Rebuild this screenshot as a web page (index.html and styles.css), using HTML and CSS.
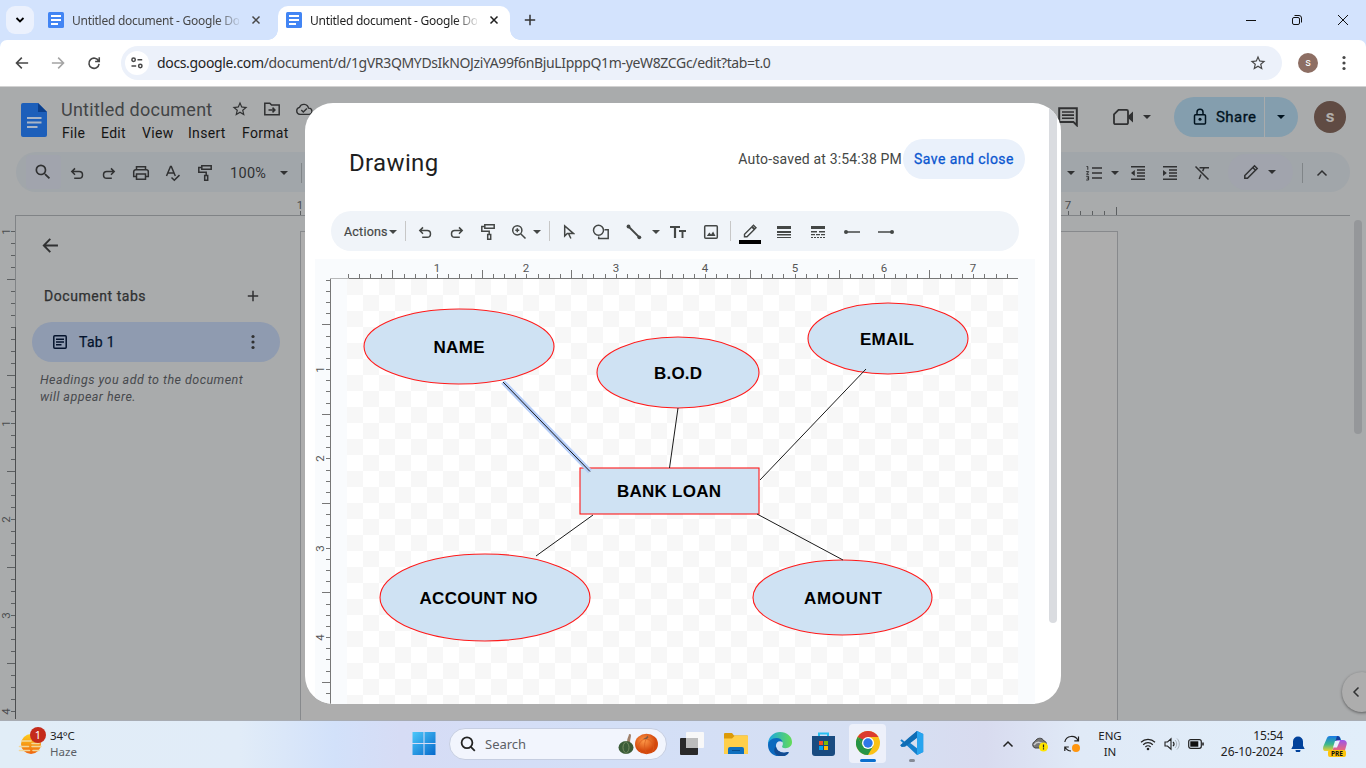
FILE: index.html
```html
<!DOCTYPE html>
<html lang="en">
<head>
<meta charset="utf-8">
<title>Untitled document - Google Docs</title>
<link rel="stylesheet" href="styles.css">
</head>
<body>
<svg class="defs" width="0" height="0" aria-hidden="true">
  <defs>
    <symbol id="caret" viewBox="0 0 10 6"><path d="M1 1h8L5 5z" fill="currentColor"/></symbol>
    <symbol id="close" viewBox="0 0 10 10"><path d="M1.500 1.500l7 7M8.500 1.500l-7 7" class="st15"/></symbol>
    <symbol id="star" viewBox="0 0 24 24"><path fill="currentColor" d="M22 9.24l-7.19-.62L12 2 9.19 8.63 2 9.24l5.46 4.73L5.82 21 12 17.27 18.18 21l-1.63-7.03L22 9.24zM12 15.4l-3.76 2.27 1-4.28-3.32-2.88 4.38-.38L12 6.1l1.71 4.04 4.38.38-3.32 2.88 1 4.28L12 15.4z"/></symbol>
    <symbol id="undo" viewBox="0 0 16 16"><path d="M5.200 13.200h5a3.300 3.300 0 0 0 0-6.600H3M6 3.400L2.800 6.600 6 9.800" class="st15"/></symbol>
    <symbol id="redo" viewBox="0 0 16 16"><path d="M10.800 13.200h-5a3.300 3.300 0 0 1 0-6.600H13M10 3.400l3.200 3.200L10 9.800" class="st15"/></symbol>
    <symbol id="roller" viewBox="0 0 16 18"><path d="M4.800 1.800h9.400v3.400H4.800zM4.800 3.500H1.800v4.700h7.400v3M7.700 11.500h3v4.700h-3z" class="st15"/></symbol>
    <symbol id="docsfile" viewBox="0 0 16 16"><rect width="16" height="16" rx="1.500" fill="#4285f4"/><path d="M3 4h10M3 8h10M3 12h7" stroke="#fff" stroke-width="1.800"/></symbol>
    <symbol id="back" viewBox="0 0 16 16"><path d="M15 8H2M7.800 1.800L1.700 8l6.100 6.200" class="st2"/></symbol>
    <symbol id="dots" viewBox="0 0 4 16"><g fill="currentColor"><circle cx="2" cy="2.500" r="1.600"/><circle cx="2" cy="8" r="1.600"/><circle cx="2" cy="13.500" r="1.600"/></g></symbol>
    <symbol id="chev" viewBox="0 0 12 8"><path d="M1.500 6.500L6 2l4.500 4.500" class="st15"/></symbol>
    <symbol id="plus" viewBox="0 0 12 12"><path d="M6 .8v10.400M.8 6h10.400" class="st15"/></symbol>
  </defs>
</svg>

<div class="tabstrip">
  <button class="tabsearch"><svg width="10" height="8" viewBox="0 0 10 8"><path d="M1.500 2L5 5.500 8.500 2" class="st2"/></svg></button>
  <div class="tab tab-idle">
    <svg class="favicon"><use href="#docsfile"/></svg>
    <span class="tab-text">Untitled document - Google Docs</span>
    <svg class="x"><use href="#close"/></svg>
  </div>
  <div class="tab tab-active">
    <svg class="favicon"><use href="#docsfile"/></svg>
    <span class="tab-text">Untitled document - Google Docs</span>
    <svg class="x"><use href="#close"/></svg>
  </div>
  <svg class="newtab" width="12" height="12"><use href="#plus"/></svg>
  <div class="winctl">
    <svg width="12" height="12" viewBox="0 0 12 12"><path d="M1 6.500h10" stroke="#111"/></svg>
    <svg width="12" height="12" viewBox="0 0 12 12"><rect x="1.500" y="3.500" width="7" height="7" rx="1.500" class="st1"/><path d="M3.500 1.500h4.500a2.500 2.500 0 0 1 2.500 2.500v4.500" class="st1"/></svg>
    <svg width="12" height="12" viewBox="0 0 12 12"><path d="M1 1l10 10M11 1L1 11" class="st1"/></svg>
  </div>
</div>

<div class="addressbar">
  <svg class="nav" viewBox="0 0 16 16"><use href="#back"/></svg>
  <svg class="nav nav-off" viewBox="0 0 16 16"><path d="M1 8h13M8.200 1.800L14.300 8l-6.100 6.200" class="st2"/></svg>
  <svg class="nav" viewBox="0 0 16 16"><path d="M13.300 5.800A5.800 5.800 0 1 0 13.800 9M14 1.500v4.700H9.300" class="st2"/></svg>
  <div class="omnibox">
    <span class="siteinfo"><svg width="14" height="14" viewBox="0 0 14 14"><g class="st15"><circle cx="3.600" cy="3.800" r="1.700"/><path d="M7.500 3.800h4.700M1.500 10h4.700"/><circle cx="10.300" cy="10" r="1.700"/></g></svg></span>
    <span class="url"><b>docs.google.com</b>/document/d/1gVR3QMYDsIkNOJziYA99f6nBjuLIpppQ1m-yeW8ZCGc/edit?tab=t.0</span>
    <svg class="bookmark"><use href="#star"/></svg>
  </div>
  <span class="avatar-sm">s</span>
  <svg class="kebab"><use href="#dots"/></svg>
</div>

<main class="app">
  <header class="dochead">
    <svg class="logo" viewBox="0 0 26 34"><path d="M2 0h15l9 9v23a2 2 0 0 1-2 2H2a2 2 0 0 1-2-2V2a2 2 0 0 1 2-2z" fill="#1d5fba"/><path d="M17 0l9 9h-9z" fill="#0b3f8c"/><path d="M6 15h14.500M6 19.500h14.500M6 24h10.500" stroke="#a9b5c6" stroke-width="1.800"/></svg>
    <div class="titles">
      <div class="titlerow">
        <span class="doctitle">Untitled document</span>
        <svg class="ticon"><use href="#star"/></svg>
        <svg class="ticon tfolder" viewBox="0 0 18 18"><path d="M1.800 3.200h5l1.800 1.900h7.600v9.700H1.800zM5.500 10h6M9.500 7.600l2.400 2.400-2.400 2.400" class="st15"/></svg>
        <svg class="ticon" viewBox="0 0 20 18"><path d="M5.500 15a4 4 0 0 1-.4-7.900A5.200 5.200 0 0 1 15 8a3.500 3.500 0 0 1 .5 7zM7 10.200l2.200 2.200 4-4" class="st15"/></svg>
      </div>
      <nav class="menus"><span class="m-file">File</span><span class="m-edit">Edit</span><span class="m-view">View</span><span class="m-insert">Insert</span><span class="m-format">Format</span></nav>
    </div>
    <div class="headright">
      <svg class="comment" viewBox="0 0 20 20"><path d="M1.200 1.300h17.600v17l-3.500-3.400H1.200z" fill="none" stroke="currentColor" stroke-width="2"/><path d="M4 5h12M4 8.100h12M4 11.200h12" stroke="currentColor" stroke-width="1.600"/></svg>
      <svg class="cam" viewBox="0 0 22 18"><path d="M6.500 1.800h8a1.500 1.500 0 0 1 1.500 1.500v11.400a1.500 1.500 0 0 1-1.500 1.500h-11a1.500 1.500 0 0 1-1.500-1.500V6.300z" class="st2"/><path d="M16 8l5-4.500v11L16 10z" fill="currentColor"/></svg>
      <svg class="caret camcaret"><use href="#caret"/></svg>
      <div class="share">
        <span class="share-main"><svg width="14" height="18" viewBox="0 0 14 18"><rect x="1.500" y="6.700" width="11" height="9.300" rx="1" class="st15"/><path d="M4 6.500V4.300a3 3 0 0 1 6 0v2.200" class="st15"/><circle cx="7" cy="11.300" r="1.500" fill="currentColor"/></svg>Share</span>
        <span class="share-more"><svg class="caret"><use href="#caret"/></svg></span>
      </div>
      <span class="avatar">s</span>
    </div>
  </header>

  <div class="toolbar">
    <span class="tb tb-search"><svg width="20" height="20" viewBox="0 0 24 24"><path fill="currentColor" d="M15.500 14h-.79l-.28-.27A6.471 6.471 0 0 0 16 9.500 6.500 6.500 0 1 0 9.500 16c1.610 0 3.090-.59 4.230-1.570l.27.28v.79l5 4.990L20.490 19l-4.990-5zm-6 0C7.010 14 5 11.990 5 9.500S7.010 5 9.500 5 14 7.010 14 9.500 11.990 14 9.500 14z"/></svg></span>
    <span class="tb"><svg width="16" height="16"><use href="#undo"/></svg></span>
    <span class="tb"><svg width="16" height="16"><use href="#redo"/></svg></span>
    <span class="tb"><svg width="18" height="16" viewBox="0 0 18 16"><path d="M4.500 4.500V1.700h9v2.800M4.500 11.500H1.700V6.800a2 2 0 0 1 2-2h10.600a2 2 0 0 1 2 2v4.700h-2.800M4.500 9h9v5.300h-9z" class="st15"/></svg></span>
    <span class="tb"><svg width="16" height="17" viewBox="0 0 16 17"><path d="M1.500 11L5.500 1.500h.8L10.300 11M3 8h6M6.500 12.500l2.800 2.800 5.200-5.200" class="st15"/></svg></span>
    <span class="tb tb-roll"><svg width="16" height="18"><use href="#roller"/></svg></span>
    <span class="zoomval">100%</span>
    <svg class="caret"><use href="#caret"/></svg>
    <i class="sep sep-left"></i>
    <div class="tb-right">
      <svg class="caret"><use href="#caret"/></svg>
      <svg class="r-num" viewBox="0 0 16 16"><path d="M6 3h10M6 8h10M6 13h10" class="st15"/><path d="M.5 1.500h1.300v3.300M.2 6.600h2.500L.6 9.300h2.300M.2 11.300h2.400v3.700H.2M.8 13.100h1.800" fill="none" stroke="currentColor"/></svg>
      <svg class="caret r-c2"><use href="#caret"/></svg>
      <svg class="r-out" viewBox="0 0 16 16"><path d="M1 1.800h14M7 5h8M7 8h8M7 11h8M1 14.200h14" class="st15"/><path d="M4.800 5v6L1 8z" fill="currentColor"/></svg>
      <svg class="r-in" viewBox="0 0 16 16"><path d="M1 1.800h14M7 5h8M7 8h8M7 11h8M1 14.200h14" class="st15"/><path d="M1 5v6l3.800-3z" fill="currentColor"/></svg>
      <svg class="r-clear" viewBox="0 0 16 16"><path d="M5.500 2.800H15M10 3L8.700 6.200M7 9.500L5.200 14M1.500 1.500l13 13" class="st15"/></svg>
      <span class="penmode"><svg width="16" height="16" viewBox="0 0 16 16"><path d="M1.800 14.200V11.500L11.500 1.800l2.700 2.700L4.500 14.200zM9.800 3.500l2.700 2.700" class="st15"/></svg><svg class="caret"><use href="#caret"/></svg></span>
      <i class="sep"></i>
      <svg class="r-chev"><use href="#chev"/></svg>
    </div>
  </div>

  <svg class="hruler" id="doc-hruler" width="1350" height="24"></svg>
  <div class="workspace">
    <svg class="vruler" id="doc-vruler" width="16" height="504"></svg>
    <aside class="sidebar">
      <svg class="sb-back"><use href="#back"/></svg>
      <div class="sb-head"><span>Document tabs</span><svg width="12" height="12"><use href="#plus"/></svg></div>
      <div class="sb-tab"><svg width="16" height="16" viewBox="0 0 16 16"><rect x="1.800" y="1.800" width="12.400" height="12.400" rx="1" class="st15"/><path d="M4 5.200h8M4 8h8M4 10.800h5.500" class="st15"/></svg><span>Tab 1</span><svg class="sb-dots"><use href="#dots"/></svg></div>
      <p class="sb-note"><span>Headings you add to the document</span><br><span>will appear here.</span></p>
    </aside>
    <div class="paper"></div>
    <i class="docscroll"></i>
    <span class="expander"><svg width="8" height="12" viewBox="0 0 8 12"><path d="M6.500 1.500L2 6l4.500 4.500" class="st15"/></svg></span>
  </div>

  <section class="dialog">
    <div class="dlg-head">
      <h1>Drawing</h1>
      <span class="saved">Auto-saved at 3:54:38 PM</span>
      <button class="savebtn"><span>Save and close</span></button>
    </div>
    <div class="dlg-tools">
      <span class="actions">Actions</span><svg class="caret"><use href="#caret"/></svg>
      <i class="sep d-s1"></i>
      <svg class="d-undo"><use href="#undo"/></svg>
      <svg class="d-redo"><use href="#redo"/></svg>
      <svg class="d-roll"><use href="#roller"/></svg>
      <svg class="d-zoom" viewBox="0 0 16 16"><circle cx="6.300" cy="6.300" r="4.600" class="st15"/><path d="M9.700 9.700l4.800 4.800M6.300 4.300v4M4.300 6.300h4" class="st15"/></svg>
      <svg class="caret d-c1"><use href="#caret"/></svg>
      <i class="sep d-s2"></i>
      <svg class="d-cur" viewBox="0 0 12 16"><path d="M1.700 2v10l2.600-2.600h6L1.700 2zM5.500 9.500l2.400 5" class="st15"/></svg>
      <svg class="d-shape" viewBox="0 0 18 16"><circle cx="6.500" cy="6.200" r="5" class="st15"/><path d="M12.500 5.700h3.700v8.800H6.700v-2" class="st15"/></svg>
      <svg class="d-line" viewBox="0 0 16 16"><path d="M2.500 2.500l11 11" class="st2"/><circle cx="2.500" cy="2.500" r="1.900" fill="currentColor"/><circle cx="13.300" cy="13.300" r="1.900" fill="currentColor"/></svg>
      <svg class="caret d-c2"><use href="#caret"/></svg>
      <svg class="d-text" viewBox="0 0 16 14"><path d="M0 2h10M5 2v11" stroke="currentColor" stroke-width="2.200"/><path d="M9 6h7M12.500 6v7" stroke="currentColor" stroke-width="1.900"/></svg>
      <svg class="d-img" viewBox="0 0 16 16"><rect x="1.700" y="1.700" width="12.600" height="12.600" rx="1" class="st15"/><path d="M3.800 12l2.500-3.500 1.800 2 2-3 2.400 4.500z" fill="currentColor"/></svg>
      <i class="sep d-s3"></i>
      <svg class="d-pen" viewBox="0 0 22 20"><path d="M5.500 12.800v-2.500l7.300-7.300 2.500 2.500L8 12.800zM13.200 2.500l1.300-1.300 2.500 2.500-1.300 1.300z" fill="none" stroke="currentColor" stroke-width="1.400"/><path d="M0 16h22v4H0z" fill="#000"/></svg>
      <svg class="d-weight" viewBox="0 0 14 12"><path d="M0 0h14v3H0zM0 5h14v2H0zM0 8h14v1.500H0zM0 11h14v1H0z" fill="currentColor"/></svg>
      <svg class="d-dash" viewBox="0 0 14 12"><path d="M0 0h14v3H0zM0 5h6v1.500H0zM8 5h6v1.500H8zM0 8h4v1.300H0zM5 8h4v1.300H5zM10 8h4v1.300h-4zM0 11h2v1H0zM3 11h2v1H3zM6 11h2v1H6zM9 11h2v1H9zM12 11h2v1h-2z" fill="currentColor"/></svg>
      <svg class="d-end1" viewBox="0 0 16 6"><path d="M2 3h14" stroke="currentColor" stroke-width="1.500"/><circle cx="2" cy="3" r="2" fill="currentColor"/></svg>
      <svg class="d-end2" viewBox="0 0 16 6"><path d="M0 3h14" stroke="currentColor" stroke-width="1.500"/><circle cx="14" cy="3" r="2" fill="currentColor"/></svg>
    </div>
    <div class="board">
      <svg class="b-hruler" id="draw-hruler" width="720" height="20"></svg>
      <svg class="b-vruler" id="draw-vruler" width="16" height="425"></svg>
      <svg class="canvas" viewBox="347 279 671 425">
        <g class="shape">
          <ellipse cx="459" cy="346.500" rx="95" ry="37.500"/>
          <ellipse cx="678" cy="372.500" rx="81" ry="35.500"/>
          <ellipse cx="888" cy="338.500" rx="80" ry="35.500"/>
          <rect x="580" y="468" width="179" height="46"/>
          <ellipse cx="485" cy="597.500" rx="105" ry="43.500"/>
          <ellipse cx="842.500" cy="597.500" rx="89.500" ry="37.500"/>
        </g>
        <path d="M503 382l87 89.500" class="selected"/>
        <path d="M503 382l87 89.500M678 408l-8.500 60M866 369L760 480M593 515l-57 41M757 514l86 46" class="link"/>
        <g class="label">
          <text x="433.500" y="353" textLength="51">NAME</text>
          <text x="654" y="379" textLength="48">B.O.D</text>
          <text x="860" y="345" textLength="54">EMAIL</text>
          <text x="617" y="497" textLength="104">BANK LOAN</text>
          <text x="419.500" y="604" textLength="118">ACCOUNT NO</text>
          <text x="804" y="604" textLength="78">AMOUNT</text>
        </g>
      </svg>
    </div>
    <i class="dlg-scroll"></i>
  </section>
</main>

<footer class="taskbar">
  <div class="weather">
    <span class="wicon"><svg width="28" height="30" viewBox="0 0 28 30"><defs><linearGradient id="sun" x2="0" y2="1"><stop offset="0" stop-color="#ffcf1c"/><stop offset="1" stop-color="#ee6510"/></linearGradient></defs><circle cx="13" cy="16" r="10" fill="url(#sun)"/><path d="M4 13h9M14 15.500h7M1.500 18.500h9M14 18.500h9M1.500 22.500h10M15 22.500h6" stroke="#f3d79a" stroke-width="1.600" stroke-linecap="round"/></svg><b class="badge">1</b></span>
    <div class="wtext"><span class="deg">34°C</span><span class="haze">Haze</span></div>
  </div>
  <div class="apps">
    <svg class="win" viewBox="0 0 23 23"><defs><linearGradient id="wg" x2="1" y2="1"><stop offset="0" stop-color="#4cc8fa"/><stop offset="1" stop-color="#0669cb"/></linearGradient></defs><path d="M0 0h11v11H0zM12 0h11v11H12zM0 12h11v11H0zM12 12h11v11H12z" fill="url(#wg)"/></svg>
    <div class="search"><svg width="16" height="16" viewBox="0 0 16 16"><circle cx="7" cy="6.800" r="5.400" class="st2"/><path d="M10.800 10.800l4 4" class="st2"/></svg><span>Search</span>
      <svg class="pumpkins" viewBox="0 0 42 22"><defs><radialGradient id="og" cx=".4" cy=".35"><stop offset="0" stop-color="#ff9b4a"/><stop offset="1" stop-color="#d4480c"/></radialGradient></defs><path d="M9 9c0-4 2-6 2-8l2 .5C13 5 12 6 12 10z" fill="#a0806a"/><ellipse cx="8" cy="14.500" rx="7.500" ry="6.500" fill="#3b5c38"/><path d="M8 8.500c-4 3-4 9 0 12M8 8.500c4 3 4 9 0 12" stroke="#82966a" fill="none" stroke-width=".8"/><ellipse cx="28.500" cy="11" rx="11.500" ry="10.200" fill="url(#og)"/><path d="M27 6c-8 2-8 12-3 14M28 6c-2 5-2 10 1 15M29 6c7 2 8 10 5 13" stroke="#d65a1c" fill="none" stroke-width=".7"/><path d="M25 5.500l3.500.8 2-1.800-1-2-1.500 2z" fill="#865a45"/></svg>
    </div>
    <svg class="taskview" viewBox="0 0 24 23"><rect y="6" width="18" height="17" rx="1" fill="#292929"/><rect x="6" y="0" width="18" height="16" rx="1" fill="#f8f8f8"/><rect x="6" y="6" width="12" height="10" fill="#bcbcbc"/></svg>
    <svg class="folder" viewBox="0 0 24 23"><path d="M1 1h7l2 2.500h13a1 1 0 0 1 1 1V11H0V2a1 1 0 0 1 1-1z" fill="#dc9a08"/><path d="M0 6.500h8l3-3h12a1 1 0 0 1 1 1V22H0z" fill="#ffcf4a"/><path d="M4 22v-5a2 2 0 0 1 2-2h12a2 2 0 0 1 2 2v5z" fill="#0f6fbe"/><path d="M8 18.500h8" stroke="#064e8d"/></svg>
    <svg class="edge" viewBox="0 0 24 24"><defs><linearGradient id="eg" x2="1"><stop offset="0" stop-color="#1aa5e5"/><stop offset="1" stop-color="#63dc56"/></linearGradient></defs><path d="M0 11C1 4 6 0 12 0c7 0 12 4.500 12 10 0 4-3 6.200-6.500 6.200-3 0-4-1-3.200-2.200 2-3-.8-7-5.300-7C4 7 1 9 0 13z" fill="url(#eg)"/><path d="M0 13c0-4 4-7 8.500-7 3 0 5.500 1.500 6 4-4-2-7 1-6.500 4.500.6 4.500 6 7.500 11.500 5.500.8-.3 1.500.2 1 1C16 28 0 25 0 13z" fill="#0c69be"/><path d="M8 14.500c.6 4.500 6 7.500 11.500 5.500.8-.3 1.500.2 1 1-3 3.500-8 3.800-11.500 2-4-3-3-7-1-8.500z" fill="#134b91"/></svg>
    <svg class="store" viewBox="0 0 23 24"><path d="M7 5V1.500h9V5" fill="none" stroke="#28c0f2" stroke-width="2"/><path d="M0 4h23v17a3 3 0 0 1-3 3H3a3 3 0 0 1-3-3z" fill="#194b80"/><path d="M7 9h4v4H7z" fill="#f25022"/><path d="M12 9h4v4h-4z" fill="#7fba00"/><path d="M7 14h4v4H7z" fill="#00a4ef"/><path d="M12 14h4v4h-4z" fill="#ffb900"/></svg>
    <span class="chrome"><svg width="24" height="24" viewBox="0 0 24 24"><circle cx="12" cy="12" r="12" fill="#fbc116"/><path d="M12 12L1.600 6A12 12 0 0 1 22.400 6H12z" fill="#dc3b2e"/><path d="M1.600 6A12 12 0 0 0 12 24l5.200-9H12L6.800 15z" fill="#269447"/><path d="M1.600 6L6.800 15h5.200v-3L8 9z" fill="#269447"/><circle cx="12" cy="12" r="6" fill="#fff"/><circle cx="12" cy="12" r="4.700" fill="#2e78e8"/></svg><i></i></span>
    <span class="code"><svg width="24" height="24" viewBox="0 0 24 24"><path d="M17 0l6.200 3v18L17 24 5 12.800l-3.300 2.700L.3 14.300 3 12 .3 9.500l1.400-1.300L5 10.900z" fill="#147fcc"/><path d="M17 6.700v10.600L10.200 12z" fill="#d7dfef"/><path d="M.3 14.300L9 6.500 17 0v6.700L5 15.800 1.700 16z" fill="#0f6db5"/><path d="M17 0l6.200 3v18L17 24z" fill="#27a4ef"/></svg><i></i></span>
  </div>
  <div class="tray">
    <svg class="t-chev"><use href="#chev"/></svg>
    <svg class="t-cloud" viewBox="0 0 18 16"><path d="M4 12a3.500 3.500 0 0 1 0-6.600C6 1.500 11 1 13 5c3 .5 3 4 1 7z" fill="#777" stroke="#444"/><path d="M3 9c3-4 7-3 10 0" fill="none" stroke="#ccc" stroke-width="1.500"/><circle cx="12.500" cy="11" r="4.500" fill="#ffe500"/><path d="M12.500 8.500v3M12.500 12.300v1.300" stroke="#222" stroke-width="1.200"/></svg>
    <svg class="t-sync" viewBox="0 0 18 18"><path d="M1.800 7A7 7 0 0 1 15 5.500M15.500 1.500v4.300h-4.200M1.800 16v-4h4M2.200 12.500A7 7 0 0 0 8 16" fill="none" stroke="#222" stroke-width="1.200"/><circle cx="13" cy="13" r="4" fill="#ff960f"/></svg>
    <div class="lang"><span>ENG</span><span>IN</span></div>
    <svg class="t-wifi" viewBox="0 0 16 14"><path d="M1 5.300a10 10 0 0 1 14 0M3.200 7.700a6.800 6.800 0 0 1 9.600 0M5.400 10a3.700 3.700 0 0 1 5.200 0" fill="none" stroke="#222" stroke-width="1.200"/><circle cx="8" cy="12" r="1.300" fill="#222"/></svg>
    <svg class="t-vol" viewBox="0 0 16 14"><path d="M1 5h2.500L7 1.800v10.400L3.500 9H1zM9 4.800c1.200 1.200 1.200 3.200 0 4.400" fill="none" stroke="#222" stroke-width="1.100"/><path d="M11 3c2.200 2.200 2.200 5.800 0 8M13 1.500c3 3 3 8 0 11" fill="none" stroke="#aab1bb"/></svg>
    <svg class="t-bat" viewBox="0 0 16 12"><rect x=".7" y="1.700" width="12.600" height="8.600" rx="2" fill="none" stroke="#222" stroke-width="1.200"/><rect x="2.300" y="3.300" width="8" height="5.400" fill="#111"/><path d="M15 4.500v3" stroke="#222" stroke-width="1.600"/></svg>
    <div class="clock"><span class="hm">15:54</span><span class="ymd">26-10-2024</span></div>
    <svg class="t-bell" viewBox="0 0 14 16"><path d="M7 .5a5 5 0 0 1 5 5v4.200l1.700 3.300H.3L2 9.700V5.500a5 5 0 0 1 5-5zM4.500 14h5a2.500 2.500 0 0 1-5 0z" fill="#00419b"/></svg>
    <span class="copilot"><svg width="24" height="18" viewBox="0 0 24 18"><defs><linearGradient id="ca" x2="0" y2="1"><stop offset="0" stop-color="#1779e8"/><stop offset=".55" stop-color="#3db88b"/><stop offset="1" stop-color="#f0cf2f"/></linearGradient><linearGradient id="cb" x2="0" y2="1"><stop offset="0" stop-color="#9a55ec"/><stop offset="1" stop-color="#fa6b63"/></linearGradient></defs><path d="M7 1h8c2 0 2.500 2 3 4l-5 1-3 8c-.7 2-2 2-4 2H3c-3 0-3.500-2-2.500-5L3.500 4C4.200 2 5 1 7 1z" fill="url(#ca)"/><path d="M14 1c2 0 3 1 3.500 4l-5 1z" fill="#153e9e"/><path d="M15 5h5c3 0 4.500 2 3.500 5L21.500 17H9l3.500-10c.5-1.500 1-2 2.500-2z" fill="url(#cb)"/><path d="M12 6l5-.5-3 7h-4z" fill="#eaf1fc"/></svg><b>PRE</b></span>
  </div>
</footer>
<script src="rulers.js"></script>
</body>
</html>
```

FILE: styles.css
```css
* { box-sizing: border-box; }
body { margin: 0; width: 1366px; height: 768px; overflow: hidden; font-family: Roboto, "Liberation Sans", sans-serif; color: #1f1f1f; display: flex; flex-direction: column; }
svg { display: block; flex: none; }
.defs { position: absolute; }
button { border: 0; padding: 0; font: inherit; }
.st1, .st15, .st2 { fill: none; stroke: currentColor; stroke-width: 1; }
.st15 { stroke-width: 1.5; }
.st2 { stroke-width: 1.8; }
.caret { width: 10px; height: 6px; }
span { white-space: nowrap; }

/* browser chrome */
.tabstrip { height: 40px; flex: none; background: #d3e3fd; display: flex; align-items: center; }
.tabsearch { width: 28px; height: 28px; margin-left: 6px; border-radius: 9px; background: #ebf1fd; display: flex; align-items: center; justify-content: center; }
.tab { display: flex; align-items: center; font: 12px "Noto Sans", sans-serif; }
.tab-idle { margin-left: 14px; width: 213px; color: #474747; }
.tab-active { width: 232px; height: 34px; margin: 6px 0 0 17px; padding: 0 0 6px 8px; background: #fff; border-radius: 10px 10px 0 0; position: relative; color: #1f1f1f; }
.tab-active::before, .tab-active::after { content: ""; position: absolute; bottom: 0; width: 10px; height: 10px; }
.tab-active::before { left: -10px; background: radial-gradient(circle at 0 0, transparent 9.5px, #fff 10px); }
.tab-active::after { right: -10px; background: radial-gradient(circle at 100% 0, transparent 9.5px, #fff 10px); }
.favicon { width: 16px; height: 16px; }
.tab-text { width: 167px; margin-left: 8px; overflow: hidden; letter-spacing: -.27px; -webkit-mask-image: linear-gradient(90deg, #000 145px, transparent 170px); mask-image: linear-gradient(90deg, #000 145px, transparent 170px); }
.x { width: 10px; height: 10px; margin-left: 12px; }
.newtab { margin-left: 14px; color: #333; }
.winctl { display: flex; gap: 34px; margin-left: auto; padding-right: 17px; color: #111; }
.addressbar { height: 47px; flex: none; border-bottom: 1px solid #d2d2d2; display: flex; align-items: center; color: #474747; position: relative; z-index: 0; }
.addressbar::before { content: ""; position: absolute; inset: 0 0 auto; height: 10px; background: #d3e3fd; z-index: -2; }
.addressbar::after { content: ""; position: absolute; inset: 0; border-radius: 7px 7px 0 0; background: #fff; z-index: -1; }
.nav { width: 14px; height: 14px; margin-left: 15px; margin-right: 7px; }
.nav-off { color: #a4a4a4; }
.omnibox { width: 1161px; height: 34px; margin-left: 13px; border-radius: 17px; background: #ecf1fa; display: flex; align-items: center; padding-left: 4px; }
.siteinfo { width: 24px; height: 24px; border-radius: 50%; background: #fff; display: flex; align-items: center; justify-content: center; }
.url { margin: -2px 0 0 8px; font: 14px "Noto Sans", sans-serif; letter-spacing: -.35px; color: #474747; }
.url b { font-weight: 400; color: #1f1f1f; }
.bookmark { width: 18px; height: 18px; margin-left: auto; margin-right: 15px; }
.avatar-sm { width: 20px; height: 20px; margin-left: 16px; border-radius: 50%; background: #8d6e63; color: #fff; font-size: 11px; line-height: 19px; text-align: center; }
.kebab { width: 4px; height: 16px; margin-left: 24px; }

/* document, under the dialog scrim */
.app { height: 634px; flex: none; background: #a9abac; position: relative; color: #303132; border-bottom: 1px solid #a8acb3; }
.dochead { height: 65px; display: flex; }
.logo { width: 26px; height: 34px; margin: 16px 0 0 21px; }
.titles { padding: 10px 0 0 14px; }
.titlerow { height: 25px; display: flex; align-items: center; }
.doctitle { width: 151px; font-size: 18px; letter-spacing: .25px; color: #424446; line-height: 23px; margin-bottom: 1px; }
.ticon { width: 18px; height: 18px; margin-left: 19px; margin-top: -1px; }
.tfolder { margin-left: 14px; margin-right: -5px; }
.menus { display: flex; font-size: 14px; line-height: 22px; color: #151515; letter-spacing: .3px; }
.m-file { width: 40px; padding-left: 1px; } .m-edit { width: 41px; } .m-view { width: 46px; } .m-insert { width: 54px; }
.headright { margin-left: auto; display: flex; height: 60px; align-items: center; padding-right: 20px; }
.comment { width: 20px; height: 20px; margin-right: 34px; }
.cam { width: 22px; height: 18px; }
.camcaret { margin-left: 8px; }
.share { display: flex; margin-left: 22px; width: 124px; height: 40px; border-radius: 20px; overflow: hidden; background: #849eae; color: #00131f; }
.share-main { width: 91px; border-right: 1px solid #a9abac; display: flex; align-items: center; padding-left: 19px; gap: 9px; font-size: 15px; letter-spacing: .45px; -webkit-text-stroke: .35px; }
.share-more { width: 33px; display: flex; align-items: center; justify-content: center; padding-right: 2px; }
.avatar { width: 32px; height: 32px; margin-left: 16px; border-radius: 50%; background: #604b43; color: #b1adaa; font-weight: 700; font-size: 17px; text-align: center; line-height: 30px; }
.toolbar { margin-left: 16px; width: 1334px; height: 40px; border-radius: 20px; background: #a1a6aa; display: flex; align-items: center; padding: 2px 0 0 10px; }
.tb { width: 32px; height: 34px; display: flex; align-items: center; justify-content: center; }
.tb-search { width: 35px; background: #a1a4ad; border-radius: 4px; margin-top: -2px; padding-right: 1px; }
.tb-roll { padding-right: 1px; }
.zoomval { width: 49px; margin-left: 9px; font-size: 14.500px; letter-spacing: .3px; }
.sep { width: 1px; height: 20px; background: #808588; }
.sep-left { margin-left: 12px; }
.tb-right { margin-left: auto; display: flex; align-items: center; }
.r-num, .r-out, .r-in, .r-clear { width: 16px; height: 16px; }
.r-num { margin-left: 10px; } .r-c2 { margin-left: 8px; } .r-out { margin-left: 10px; } .r-in, .r-clear { margin-left: 16px; }
.penmode { width: 65px; height: 36px; margin: -2px 9px 0 18px; border-radius: 18px; background: #a1a4ad; display: flex; align-items: center; padding-left: 15px; gap: 8px; }
.r-chev { width: 12px; height: 8px; margin: 0 22px 0 13px; }
.hruler, .vruler, .b-hruler, .b-vruler { overflow: visible; }
.workspace { display: flex; height: 504px; position: relative; }
.sidebar { width: 284px; padding-left: 16px; }
.sb-back { width: 17px; height: 17px; margin: 21px 0 0 10px; }
.sb-head { margin-top: 32px; padding: 0 41px 0 12px; height: 20px; display: flex; align-items: center; justify-content: space-between; font-size: 14px; letter-spacing: .55px; -webkit-text-stroke: .25px; }
.sb-tab { width: 248px; height: 40px; margin-top: 16px; border-radius: 20px; background: #8f9bb0; display: flex; align-items: center; padding: 0 25px 0 20px; gap: 11px; color: #04132c; font-size: 14px; letter-spacing: .3px; -webkit-text-stroke: .25px; }
.sb-dots { width: 4px; height: 16px; margin-left: auto; color: #303132; }
.sb-note { margin: 9px 0 0 8px; font-size: 12.500px; line-height: 17px; font-style: italic; letter-spacing: .46px; color: #47494c; }
.paper { width: 818px; height: 489px; margin-top: 15px; border: 1px solid #87898c; border-bottom: 0; background: #adadad; }
.docscroll { width: 8px; height: 214px; margin: 4px 0 0 236px; border-radius: 4px; background: #95979a; }
.expander { position: absolute; left: 1342px; top: 456px; width: 40px; height: 40px; border-radius: 50%; background: #adadad; box-shadow: 0 1px 3px rgba(0,0,0,.45); display: flex; align-items: center; padding-left: 10px; }

/* drawing dialog */
.dialog { position: absolute; left: 305px; top: 16px; width: 756px; height: 601px; border-radius: 28px; background: #fff; overflow: hidden; color: #444746; }
.dlg-head { height: 108px; padding: 36px 36px 0 44px; display: flex; }
.dlg-head h1 { margin: 6px auto 0 0; font-size: 24px; font-weight: 400; line-height: 36px; color: #1f1f1f; letter-spacing: .35px; }
.saved { font-size: 14px; line-height: 40px; letter-spacing: .17px; margin-right: 1px; }
.savebtn { flex: none; width: 122px; height: 40px; border-radius: 20px; background: #eaf1fb; color: #0b57d0; font-size: 14px; letter-spacing: .45px; -webkit-text-stroke: .3px; }
.dlg-tools { width: 688px; height: 40px; margin-left: 26px; border-radius: 20px; background: #f0f4f9; display: flex; align-items: center; padding: 2px 0 0 13px; }
.dlg-tools .sep { background: #c7c7c7; margin-top: -2px; }
.actions { font-size: 12.500px; width: 44px; margin-top: -2px; letter-spacing: .2px; -webkit-text-stroke: .2px; }
.dlg-tools .d-s1 { margin-left: 7px; }
.d-undo, .d-redo { width: 16px; height: 16px; margin-left: 11px; }
.d-redo { margin-left: 16px; }
.d-roll { width: 16px; height: 18px; margin-left: 15px; }
.d-zoom { width: 16px; height: 16px; margin-left: 15px; }
.d-c1 { margin-left: 5px; }
.dlg-tools .d-s2 { margin-left: 7px; }
.d-cur { width: 12px; height: 16px; margin-left: 13px; }
.d-shape { width: 18px; height: 16px; margin-left: 17px; }
.d-line { width: 16px; height: 16px; margin-left: 16px; }
.d-c2 { margin-left: 9px; }
.d-text { width: 16px; height: 14px; margin-left: 9px; }
.d-img { width: 16px; height: 16px; margin-left: 17px; }
.dlg-tools .d-s3 { margin-left: 11px; }
.d-pen { width: 22px; height: 20px; margin: 3px 0 0 8px; }
.d-weight { width: 14px; height: 12px; margin-left: 16px; }
.d-dash { width: 14px; height: 12px; margin-left: 20px; }
.d-end1 { width: 16px; height: 6px; margin-left: 19px; }
.d-end2 { width: 16px; height: 6px; margin-left: 18px; }
.board { display: grid; grid-template-columns: 16px 16px 671px 17px; grid-template-rows: 20px 425px; width: 720px; margin: 8px 0 0 10px; background: #f9fbfd; }
.b-hruler { grid-column: 1 / -1; }
.canvas { grid-column: 3; width: 671px; height: 425px; background: repeating-conic-gradient(#fff 0 25%, #f7f7f7 0 50%) 0 0 / 32px 32px; }
.shape { fill: #cfe2f3; stroke: #ff1a1a; stroke-width: 1.100; }
.link { fill: none; stroke: #1a1a1a; stroke-width: 1; }
.selected { stroke: #b5cdf8; stroke-width: 5; }
.label { font: bold 17px "Liberation Sans", sans-serif; fill: #000; }
.dlg-scroll { position: absolute; left: 744px; top: 0; width: 8px; height: 520px; border-radius: 0 0 4px 4px; background: #dadce0; }
.rtext { font: 11.500px Roboto, sans-serif; text-anchor: middle; }

/* taskbar */
.taskbar { height: 47px; flex: none; display: flex; align-items: center; padding-bottom: 2px; font: 12px "Noto Sans", sans-serif; background: linear-gradient(90deg, #e1edf7 0, #e1ecf8 240px, #d2e1fa 335px, #d6dcf5 400px, #d3dff7 600px, #d6dff2 900px, #d8dbef 985px, #e0eaf7 1080px, #e1eefa 1366px); }
.weather { width: 412px; display: flex; padding-left: 18px; }
.wicon { position: relative; width: 28px; height: 30px; }
.badge { position: absolute; left: 12px; top: -1px; width: 16px; height: 16px; border-radius: 50%; background: #c42b1c; color: #fff; font-weight: 400; font-size: 11px; line-height: 15px; text-align: center; }
.wtext { display: flex; flex-direction: column; line-height: 16px; margin-left: 4px; font-size: 11.500px; }
.deg { letter-spacing: -.2px; }
.haze { color: #5b5f66; }
.apps { display: flex; align-items: center; width: 589px; }
.win { width: 24px; height: 23px; }
.search { width: 218px; height: 32px; margin-left: 13px; border-radius: 16px; border: 1px solid #c6cee1; background: #f2f5fd; display: flex; align-items: center; padding-left: 10px; font-size: 13px; color: #5c5f66; }
.search svg:first-child { color: #222; }
.search span { margin-left: 9px; }
.pumpkins { width: 42px; height: 22px; margin-left: auto; margin-right: 6px; }
.taskview { width: 24px; height: 23px; margin-left: 13px; }
.folder { width: 24px; height: 23px; margin-left: 20px; }
.edge { width: 24px; height: 24px; margin-left: 20px; }
.store { width: 23px; height: 24px; margin-left: 20px; }
.chrome { width: 37px; height: 39px; margin-left: 14px; border-radius: 4px; background: #edf0fa; display: flex; flex-direction: column; align-items: center; padding-top: 7px; }
.chrome i { width: 16px; height: 3px; border-radius: 2px; background: #0a70cf; margin-top: 4px; }
.code { width: 24px; height: 39px; margin-left: 14px; padding-top: 7px; }
.code i { display: block; width: 6px; height: 3px; border-radius: 2px; background: #868b96; margin: 4px 0 0 9px; }
.tray { display: flex; align-items: center; color: #222; }
.t-chev { width: 12px; height: 8px; margin-left: 1px; }
.t-cloud { width: 18px; height: 16px; margin-left: 17px; }
.t-sync { width: 18px; height: 18px; margin-left: 14px; }
.lang { width: 28px; margin-left: 15px; display: flex; flex-direction: column; align-items: center; line-height: 16px; font-size: 11.500px; }
.t-wifi { width: 16px; height: 14px; margin-left: 16px; }
.t-vol { width: 16px; height: 14px; margin-left: 8px; }
.t-bat { width: 16px; height: 12px; margin-left: 8px; }
.clock { width: 79px; display: flex; flex-direction: column; align-items: flex-end; line-height: 16px; font-size: 12px; letter-spacing: -.05px; }
.hm { letter-spacing: -.2px; }
.t-bell { width: 14px; height: 16px; margin-left: 8px; }
.copilot { width: 24px; margin-left: 18px; position: relative; }
.copilot b { position: absolute; left: 5px; top: 15px; width: 18px; height: 7px; border-radius: 2px; background: #ffc40c; color: #111; font-size: 6.500px; line-height: 7px; text-align: center; }
```

FILE: rulers.js
```javascript
const NS = "http://www.w3.org/2000/svg";

function add(svg, name, attrs, text) {
  const el = document.createElementNS(NS, name);
  for (const k in attrs) el.setAttribute(k, attrs[k]);
  if (text) el.textContent = text;
  svg.appendChild(el);
}

function bar(svg, x, y, w, h, fill) {
  add(svg, "rect", { x, y, width: w, height: h, fill });
}

function label(svg, x, y, n, turn, fill) {
  const attrs = { x, y: y + 4, fill, class: "rtext" };
  if (turn) attrs.transform = `rotate(-90 ${x} ${y})`;
  add(svg, "text", attrs, String(n));
}

/* drawing board: eight ticks to the inch */
const step = 11.17;
const dh = document.getElementById("draw-hruler");
bar(dh, 15, 19, 19, 1, "#b8b9ba");
bar(dh, 34, 19, 669, 1, "#777");
for (let k = 0; k < 60; k++) {
  const x = Math.floor(33.2 + k * step), tall = k % 8 === 4;
  bar(dh, x, tall ? 11 : 15, 1, tall ? 8 : 4, "#777");
  if (k && k % 8 === 0) label(dh, x, 9, k / 8, false, "#555");
}
const dv = document.getElementById("draw-vruler");
bar(dv, 15, 0, 1, 425, "#777");
for (let k = 0; k < 38; k++) {
  const y = Math.floor(1.2 + k * step), tall = k % 8 === 4;
  bar(dv, tall ? 7 : 11, y, tall ? 8 : 4, 1, "#777");
  if (k && k % 8 === 0) label(dv, 5, y + 0.5, k / 8, true, "#555");
}

/* document page: twelve pixels to the tick */
const ph = document.getElementById("doc-hruler");
bar(ph, 15, 23, 1335, 1, "#808386");
bar(ph, 300, 19, 1, 4, "#5c5f61");
label(ph, 300, 13, 1, false, "#4a4c4e");
for (let x = 1068; x <= 1116; x += 12) {
  const tall = x === 1116;
  bar(ph, x, tall ? 15 : 19, 1, tall ? 8 : 4, "#5c5f61");
}
label(ph, 1068, 13, 7, false, "#4a4c4e");
const pv = document.getElementById("doc-vruler");
bar(pv, 15, 0, 1, 111, "#808386");
bar(pv, 15, 111, 1, 392, "#4c4e50");
for (let k = 0; k <= 40; k++) {
  const y = 15 + k * 12, tall = k % 8 === 4;
  bar(pv, tall ? 7 : 11, y, tall ? 8 : 4, 1, "#5c5f61");
}
[[15, 1], [207, 1], [303, 2], [399, 3], [495, 4]].forEach(([y, n]) => label(pv, 6, y + 0.5, n, true, "#4a4c4e"));
```
